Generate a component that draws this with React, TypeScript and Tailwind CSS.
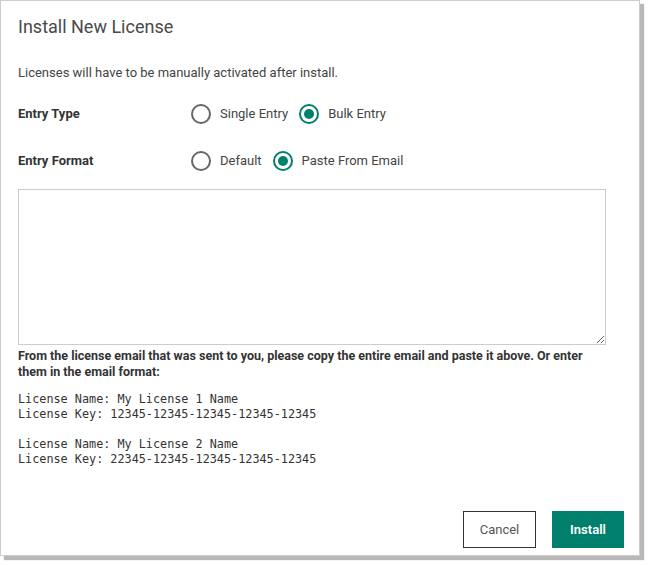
import { useState, type JSX } from 'react';

interface RadioOption {
  value: string;
  label: string;
}

function RadioGroup({
  options,
  value,
  onChange,
}: {
  options: RadioOption[];
  value: string;
  onChange: (v: string) => void;
}): JSX.Element {
  return (
    <div className="flex items-center">
      {options.map((opt) => {
        const checked = opt.value === value;
        return (
          <label key={opt.value} className="flex items-center mr-[11px] cursor-pointer" onClick={() => onChange(opt.value)}>
            {checked ? (
              <span className="w-5 h-5 rounded-full border-2 border-[#00806c] flex items-center justify-center">
                <span className="w-[10px] h-[10px] rounded-full bg-[#00806c]" />
              </span>
            ) : (
              <span className="w-5 h-5 rounded-full border-2 border-[#666]" />
            )}
            <span className="ml-[9px] text-[13px] leading-5 text-[#444]">{opt.label}</span>
          </label>
        );
      })}
    </div>
  );
}

export default function App(): JSX.Element {
  const [entryType, setEntryType] = useState('bulk');
  const [entryFormat, setEntryFormat] = useState('email');

  return (
    <div className="w-[648px] h-[565px] bg-white font-['Roboto',sans-serif]">
      <div className="w-[640px] h-[556px] border border-[#cdcdcd] shadow-[4px_4px_1px_rgba(0,0,0,0.28)] flex flex-col px-[17px] pt-[14px] pb-[7px]">
        <h1 className="text-[18px] leading-6 text-[#4a4a4a] font-normal">Install New License</h1>

        <p className="mt-[25px] text-[13px] leading-[18px] text-[#444]">
          Licenses will have to be manually activated after install.
        </p>

        <div className="mt-[22px] flex items-center h-5">
          <div className="w-[173px] text-[13px] font-bold text-[#333]">Entry Type</div>
          <RadioGroup
            value={entryType}
            onChange={setEntryType}
            options={[
              { value: 'single', label: 'Single Entry' },
              { value: 'bulk', label: 'Bulk Entry' },
            ]}
          />
        </div>

        <div className="mt-[27px] flex items-center h-5">
          <div className="w-[173px] text-[13px] font-bold text-[#333]">Entry Format</div>
          <RadioGroup
            value={entryFormat}
            onChange={setEntryFormat}
            options={[
              { value: 'default', label: 'Default' },
              { value: 'email', label: 'Paste From Email' },
            ]}
          />
        </div>

        <textarea className="mt-[18px] w-[588px] h-[156px] border border-[#ccc] bg-white outline-none p-1 text-[13px]" />

        <p className="mt-[3px] w-[590px] text-[12.5px] leading-4 font-bold text-[#333]">
          From the license email that was sent to you, please copy the entire email and paste it above. Or enter
          them in the email format:
        </p>

        <pre className="mt-[12px] font-['DejaVu_Sans_Mono',monospace] text-[11.8px] leading-[15px] text-[#333]">
          {`License Name: My License 1 Name
License Key: 12345-12345-12345-12345-12345

License Name: My License 2 Name
License Key: 22345-12345-12345-12345-12345`}
        </pre>

        <div className="mt-auto -mr-[2px] flex justify-end gap-4">
          <button className="w-[73px] h-[37px] border border-[#333] bg-white text-[13px] text-[#555]">Cancel</button>
          <button className="w-[72px] h-[37px] bg-[#00806c] text-[13px] font-semibold text-white">Install</button>
        </div>
      </div>
    </div>
  );
}
